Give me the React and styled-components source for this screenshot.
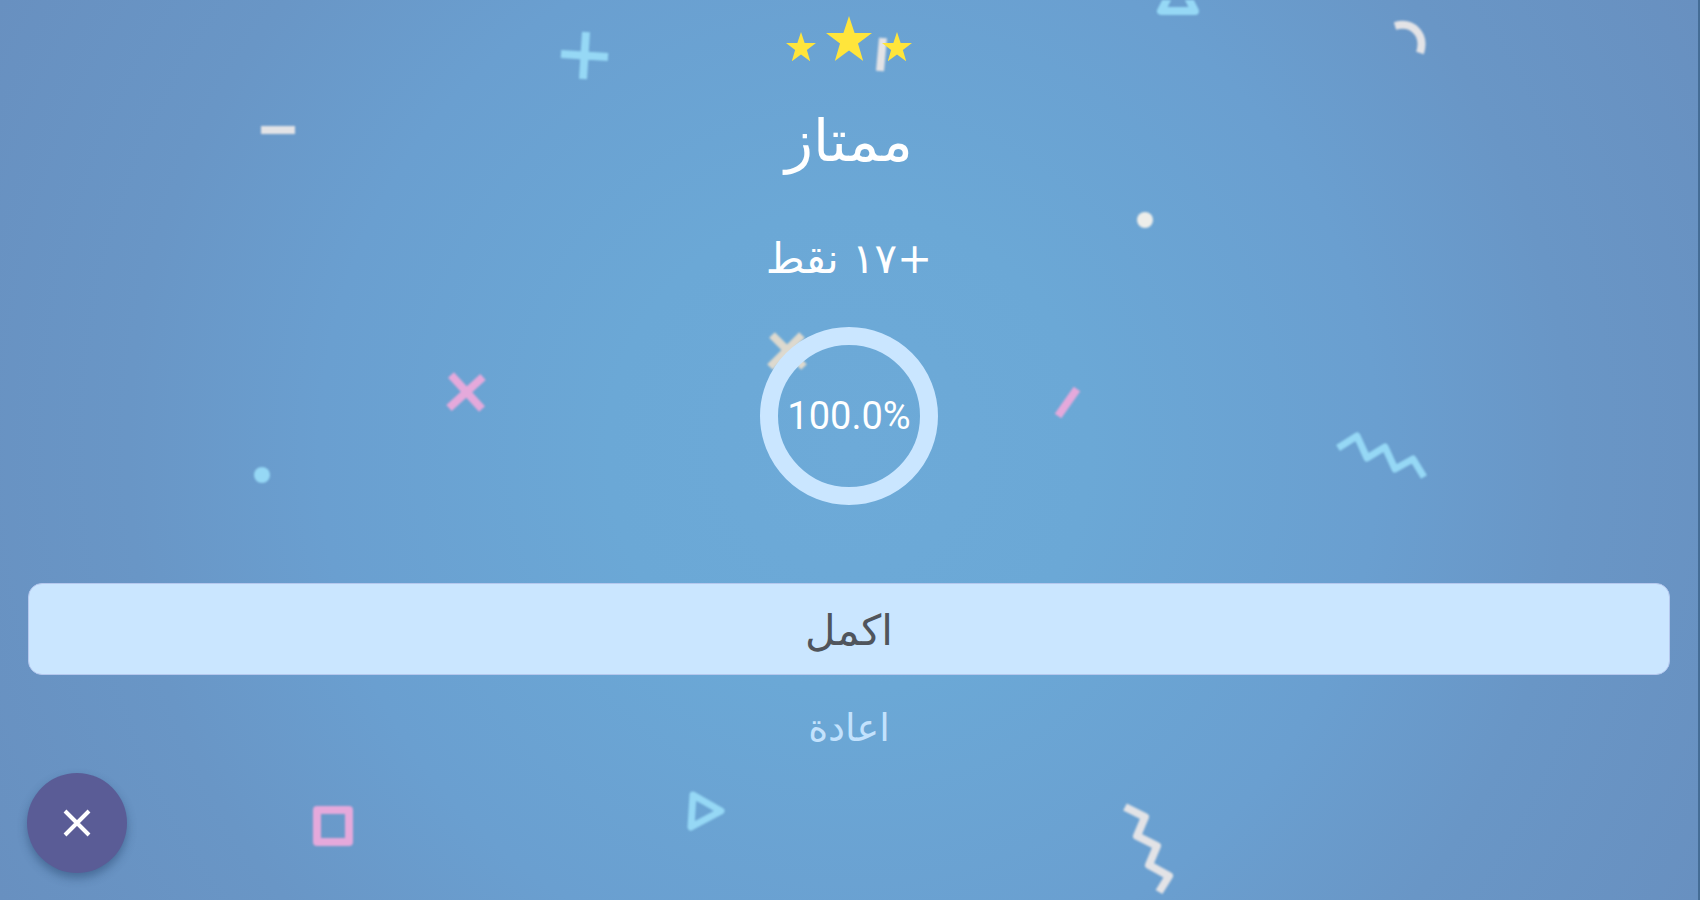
import React from 'react';
import styled, { createGlobalStyle } from 'styled-components';

const GlobalStyle = createGlobalStyle`
  * {
    box-sizing: border-box;
  }

  body {
    margin: 0;
    background: #6790c1;
  }
`;

const Page = styled.div`
  position: relative;
  overflow: hidden;
  min-height: 100vh;
  padding: 0 28px;
  border-right: 2px solid #456d96;
  background: radial-gradient(circle at center, #6daad8 0%, #6ba8d6 25%, #6a9fd0 55%, #6996c6 75%, #6890c0 100%);
  font-family: "DejaVu Sans", "Noto Sans", sans-serif;
  color: #fff;
`;

const Confetti = styled.svg`
  position: absolute;
  inset: 0;
  width: 100%;
  height: 100%;
  fill: none;
  stroke-width: 8px;
  stroke-linejoin: round;
  filter: blur(1px);
`;

const Result = styled.main`
  position: relative;
  display: flex;
  flex-direction: column;
  align-items: center;
`;

const Stars = styled.div`
  display: flex;
  align-items: flex-end;
  gap: 10px;
  padding-top: 16px;
`;

const StarIcon = styled.svg`
  display: block;
  width: ${(props) => (props.$big ? '46px' : '30px')};
  height: auto;
  fill: #ffe53b;
`;

const Title = styled.h1`
  margin: 40px 0 0;
  font-size: 58px;
  font-weight: 400;
  line-height: 80px;
`;

const Points = styled.p`
  margin: 42px 0 0;
  font-size: 42px;
  line-height: 72px;
`;

const Score = styled.div`
  display: flex;
  align-items: center;
  justify-content: center;
  width: 178px;
  height: 178px;
  margin-top: 32px;
  border: 18px solid #cae6ff;
  border-radius: 50%;
  font-family: Roboto, sans-serif;
  font-size: 38px;
`;

const Actions = styled.div`
  display: flex;
  flex-direction: column;
  align-items: center;
  align-self: stretch;
  gap: 16px;
  margin-top: 78px;
`;

const Button = styled.button`
  border: 0;
  background: none;
  font-family: inherit;
  font-size: 38px;
  line-height: 72px;
  color: #c3e2fd;
  cursor: pointer;
`;

const ContinueButton = styled(Button)`
  width: 100%;
  height: 92px;
  padding-top: 4px;
  border: 1px solid #b5c8ee;
  border-radius: 14px;
  background: #cae6ff;
  font-size: 42px;
  color: #50555c;
`;

const CloseButton = styled.button`
  position: absolute;
  left: 27px;
  bottom: 27px;
  display: flex;
  align-items: center;
  justify-content: center;
  width: 100px;
  height: 100px;
  padding: 0;
  border: 0;
  border-radius: 50%;
  background: #5a5c96;
  box-shadow: 0 5px 10px rgba(30, 60, 100, 0.45);
  cursor: pointer;
`;

const CloseIcon = styled.svg`
  width: 28px;
  height: 28px;
  stroke: #fff;
  stroke-width: 4px;
`;

function Star({ big }) {
  return (
    <StarIcon $big={big} viewBox="0 0 46 45" aria-hidden="true">
      <path d="M23 0l5.600 16.900L46 17 32 27.600l5.200 17.400L23 34.600 8.800 45 14 27.600 0 17l17.400-.1z" />
    </StarIcon>
  );
}

function Background() {
  return (
    <Confetti viewBox="0 0 1700 900" preserveAspectRatio="xMidYMid slice" aria-hidden="true">
      <g stroke="#96d8f5">
        <path d="M587 32l-3 47M562 54l47 3" />
        <path d="M1179 -22l-17 33h34z" />
        <path d="M1339 448l19-12 10 22 18-11 10 22 18-10 11 18" strokeWidth="7" />
        <path d="M694 795l28 16-30 16z" strokeWidth="7" />
        <circle cx="263" cy="475" r="8" fill="#96d8f5" stroke="none" />
      </g>
      <g stroke="#e3e3e6">
        <path d="M262 130h34" />
        <path d="M884 38l-3 33" />
        <path d="M1396 26c17-5 31 8 25 27" />
        <path d="M1126 807l20 10-8 19 20 10-8 19 20 11-10 16" />
        <path d="M773 335l32 32M803 335l-32 32" stroke="#ddd9ce" />
        <circle cx="1146" cy="220" r="8" fill="#eeeeea" stroke="none" />
      </g>
      <g stroke="#e5a9db">
        <path d="M452 375l31 34M484 377l-34 31" />
        <path d="M1078 389l-19 27" />
        <path d="M318 810h32v32h-32z" />
      </g>
    </Confetti>
  );
}

export default function App() {
  return (
    <Page dir="rtl" lang="ar">
      <GlobalStyle />
      <Background />
      <Result>
        <Stars>
          <Star />
          <Star big />
          <Star />
        </Stars>
        <Title>ممتاز</Title>
        <Points>+١٧ نقط</Points>
        <Score dir="ltr">100.0%</Score>
        <Actions>
          <ContinueButton type="button">اكمل</ContinueButton>
          <Button type="button">اعادة</Button>
        </Actions>
      </Result>
      <CloseButton type="button" aria-label="إغلاق">
        <CloseIcon viewBox="0 0 28 28">
          <path d="M2 2l24 24M26 2L2 26" />
        </CloseIcon>
      </CloseButton>
    </Page>
  );
}
